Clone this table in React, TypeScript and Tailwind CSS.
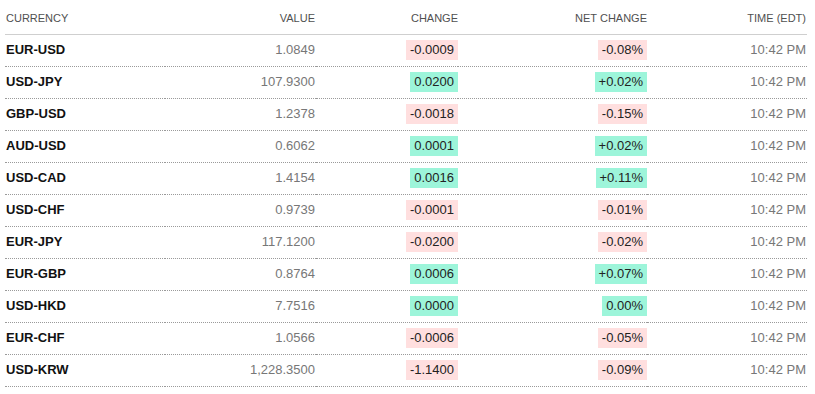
const rows = [
  { pair: 'EUR-USD', value: '1.0849', change: '-0.0009', net: '-0.08%' },
  { pair: 'USD-JPY', value: '107.9300', change: '0.0200', net: '+0.02%' },
  { pair: 'GBP-USD', value: '1.2378', change: '-0.0018', net: '-0.15%' },
  { pair: 'AUD-USD', value: '0.6062', change: '0.0001', net: '+0.02%' },
  { pair: 'USD-CAD', value: '1.4154', change: '0.0016', net: '+0.11%' },
  { pair: 'USD-CHF', value: '0.9739', change: '-0.0001', net: '-0.01%' },
  { pair: 'EUR-JPY', value: '117.1200', change: '-0.0200', net: '-0.02%' },
  { pair: 'EUR-GBP', value: '0.8764', change: '0.0006', net: '+0.07%' },
  { pair: 'USD-HKD', value: '7.7516', change: '0.0000', net: '0.00%' },
  { pair: 'EUR-CHF', value: '1.0566', change: '-0.0006', net: '-0.05%' },
  { pair: 'USD-KRW', value: '1,228.3500', change: '-1.1400', net: '-0.09%' },
]

function Badge({ text }: { text: string }) {
  const down = text.startsWith('-')
  return (
    <span
      className={
        'inline-block h-5 px-1 leading-5 ' +
        (down ? 'bg-[#ffdfdf]' : 'bg-[#9df5da]')
      }
    >
      {text}
    </span>
  )
}

export default function App() {
  return (
    <div className="bg-white w-[815px] h-[394px] pl-[5px] pt-0 font-['Liberation_Sans',Arial,sans-serif]">
      <table className="w-[802px] table-fixed border-collapse">
        <colgroup>
          <col className="w-[160px]" />
          <col className="w-[151px]" />
          <col className="w-[142px]" />
          <col className="w-[189px]" />
          <col className="w-[160px]" />
        </colgroup>
        <thead>
          <tr className="h-[34px] border-b border-[#cfcfcf] text-[11px] text-[#505050] uppercase">
            <th className="text-left font-normal pl-px pr-0 pt-[2px]">Currency</th>
            <th className="text-right font-normal pr-[1px] pt-[2px]">Value</th>
            <th className="text-right font-normal pt-[2px]">Change</th>
            <th className="text-right font-normal pt-[2px]">Net Change</th>
            <th className="text-right font-normal pr-[1px] pt-[2px]">Time (EDT)</th>
          </tr>
        </thead>
        <tbody className="text-[13px]">
          {rows.map((r) => (
            <tr key={r.pair} className="h-8 border-b border-dotted border-[#9a9a9a]">
              <td className="pl-px font-bold text-[#111]">{r.pair}</td>
              <td className="text-right pr-[1px] text-[#777]">{r.value}</td>
              <td className="text-right text-[#222]">
                <Badge text={r.change} />
              </td>
              <td className="text-right text-[#222]">
                <Badge text={r.net} />
              </td>
              <td className="text-right pr-[1px] text-[#777]">10:42 PM</td>
            </tr>
          ))}
        </tbody>
      </table>
    </div>
  )
}
